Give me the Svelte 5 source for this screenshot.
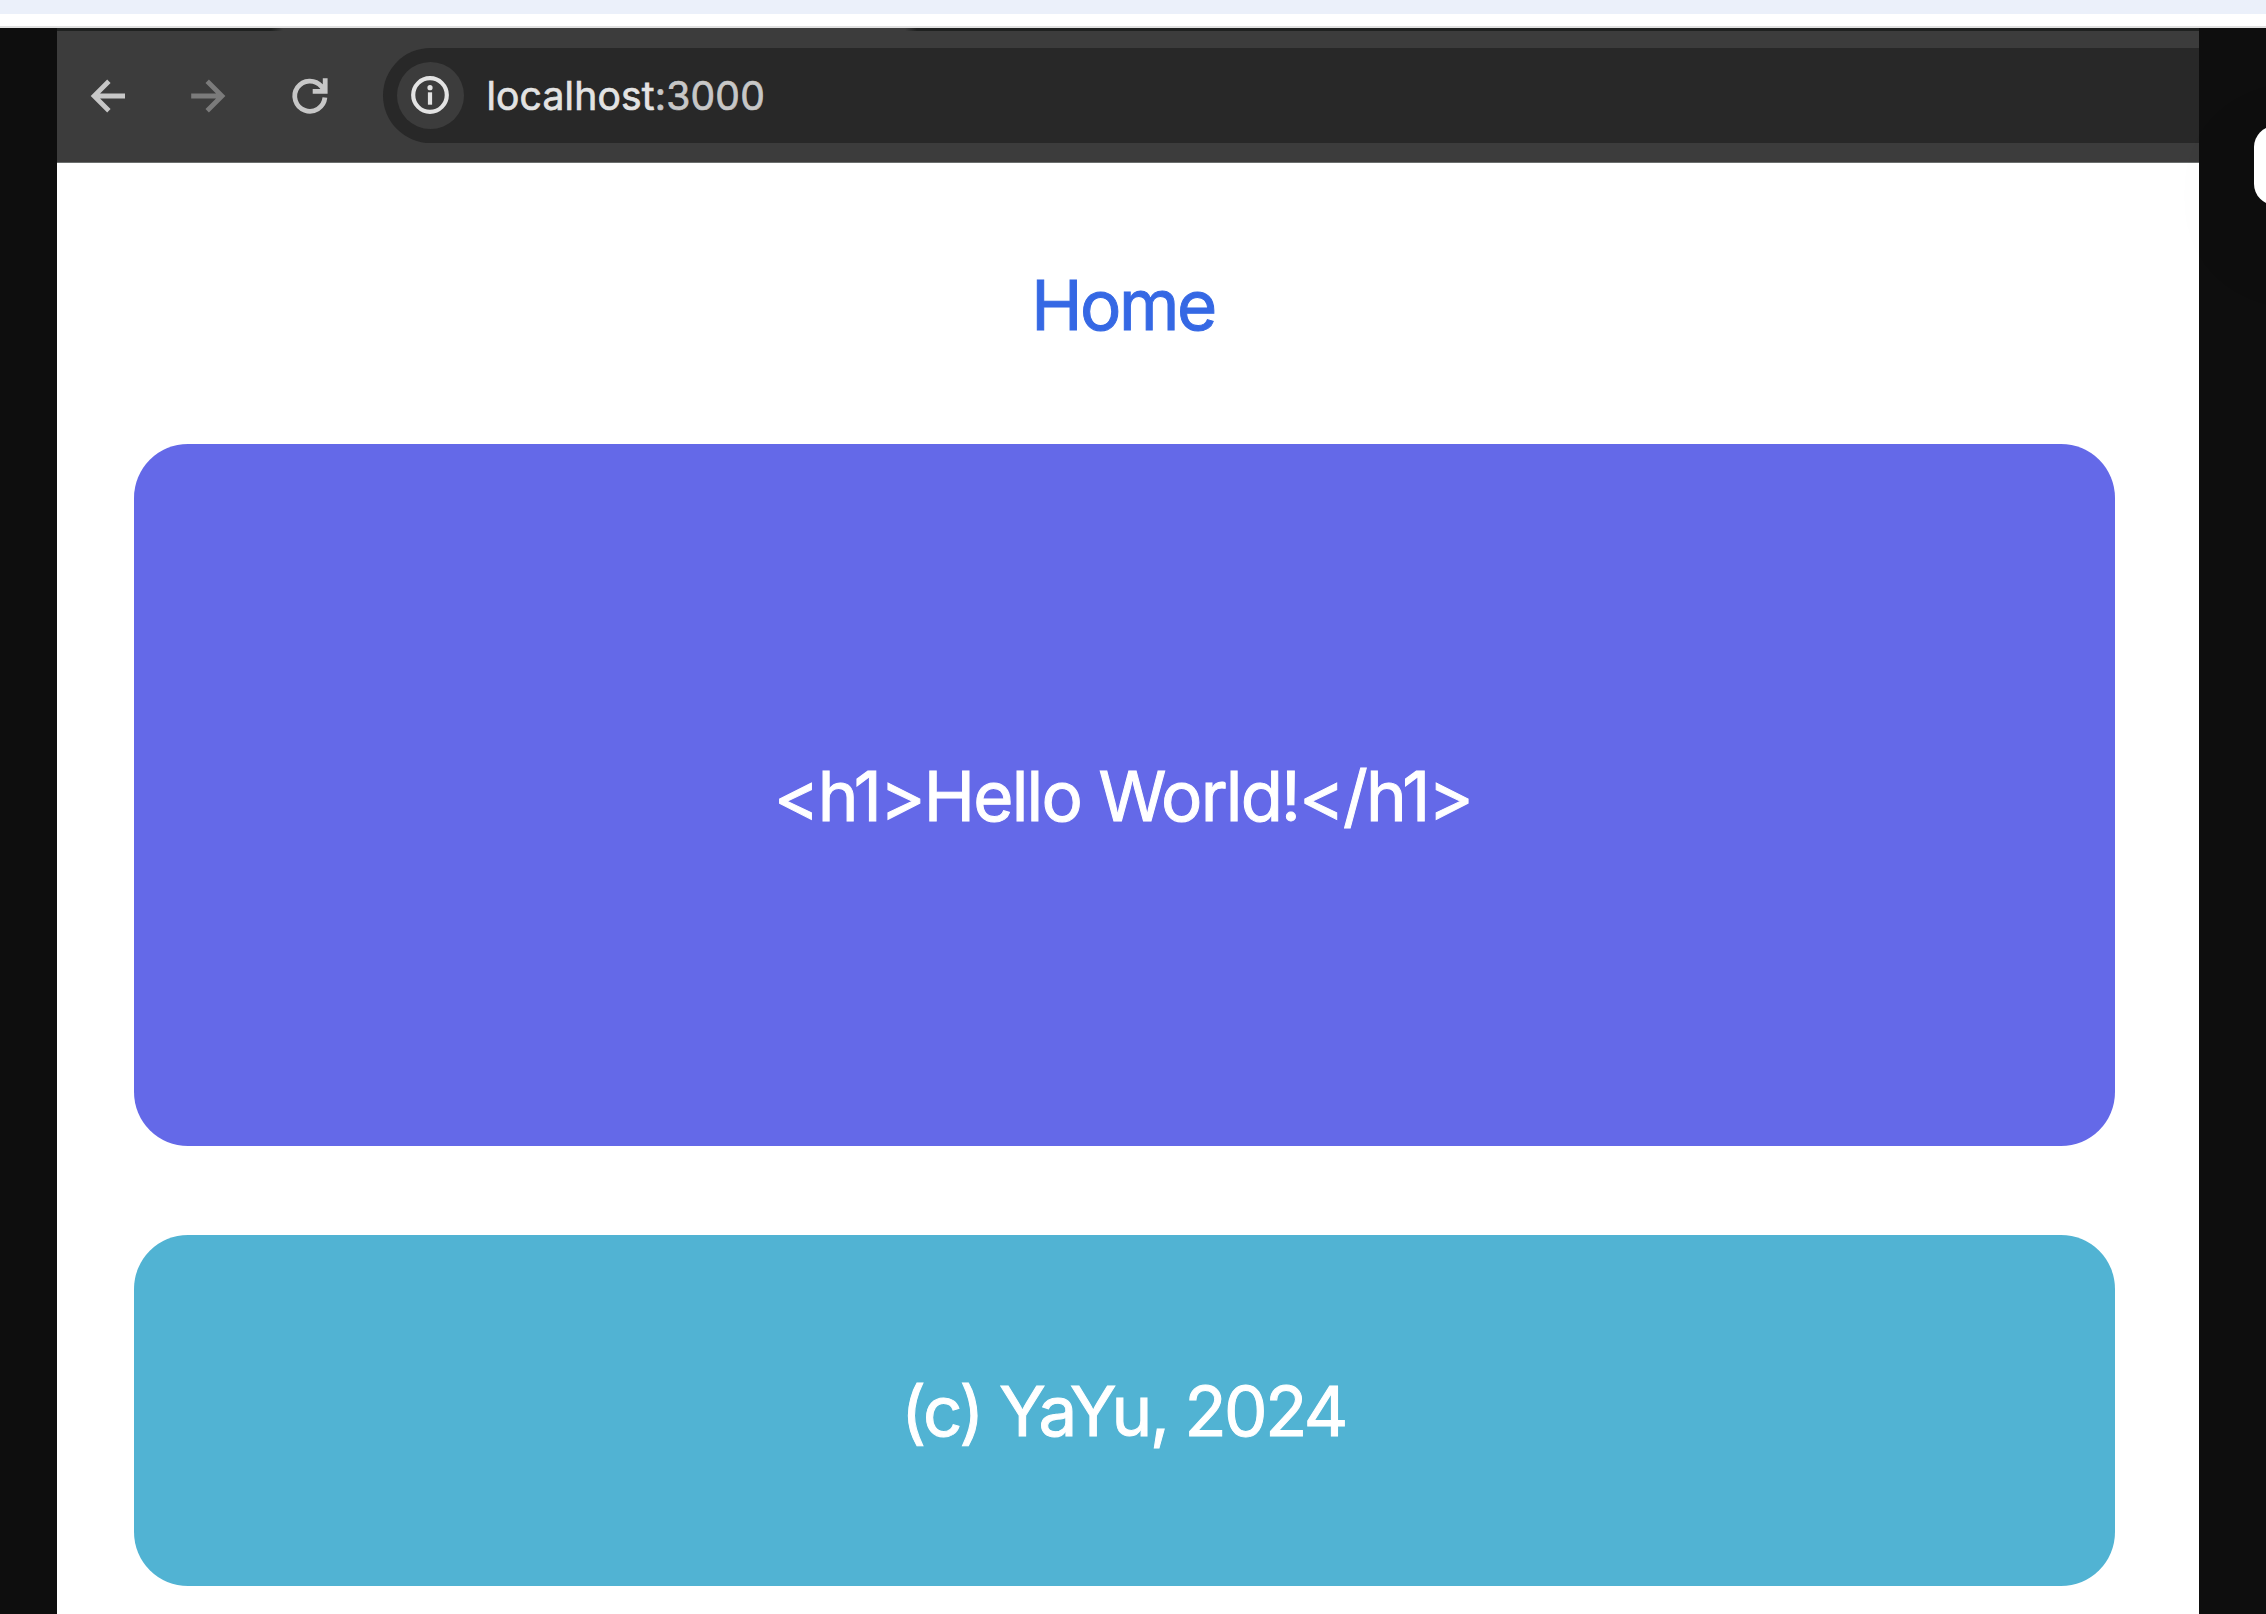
<script>
  const host = 'localhost';
  const port = ':3000';
  const heading = '<h1>Hello World!</h1>';
</script>

<div class="screen">
  <div class="band"></div>
  <div class="gap"></div>
  <main class="stage">
    <section class="browser">
      <header class="toolbar">
        <div class="tabs"></div>
        <nav class="controls">
          <svg class="icon" viewBox="0 0 40 40" aria-label="Back">
            <path d="M37 20H7M20.9 5.2L6.1 20L20.9 34.8" />
          </svg>
          <svg class="icon muted" viewBox="0 0 40 40" aria-label="Forward">
            <path d="M2.2 20H32M18.2 5.2L33 20L18.2 34.8" />
          </svg>
          <svg class="icon" viewBox="0 0 40 40" aria-label="Reload">
            <path d="M34.9 21.6A15.1 15.1 0 1 1 31.4 10.4L34 14M35.2 2.2V15.3H22.7" />
          </svg>
          <div class="address">
            <span class="info">
              <svg viewBox="0 0 40 40" aria-label="Site information">
                <circle cx="20" cy="20" r="16.8" />
                <path d="M20 17.3V29.7" />
                <circle class="dot" cx="20" cy="12.7" r="2.6" />
              </svg>
            </span>
            <span class="url">{host}<span class="port">{port}</span></span>
          </div>
        </nav>
      </header>
      <div class="page">
        <a class="home" href="/">Home</a>
        <div class="card hero"><span>{heading}</span></div>
        <div class="card footer"><span>(c) YaYu, 2024</span></div>
      </div>
    </section>
    <div class="side"><div class="bubble"></div></div>
  </main>
</div>

<style>
  :global(body) {
    margin: 0;
    overflow: hidden;
  }
  .screen {
    width: 2266px;
    height: 1614px;
    display: flex;
    flex-direction: column;
    overflow: hidden;
    background: #fff;
    font-family: Inter, 'Liberation Sans', sans-serif;
  }
  .band {
    height: 14px;
    background: #ebf0fa;
  }
  .gap {
    height: 12px;
    border-bottom: 2px solid #e0e0e0;
  }
  .stage {
    flex: 1;
    display: flex;
    padding-left: 57px;
    background: #0e0e0e;
  }
  .browser {
    flex: none;
    width: 2142px;
    background: #fff;
  }
  .toolbar {
    box-sizing: border-box;
    height: 135px;
    background: #3c3c3c;
    border-bottom: 1px solid #6b6e6d;
  }
  .tabs {
    height: 3px;
    background: linear-gradient(90deg, #1f2120 0 214px, #3c3c3c 226px 848px, #1f2120 860px);
  }
  .controls {
    display: flex;
    align-items: center;
    padding: 16.5px 0 0 31px;
  }
  .icon {
    flex: none;
    width: 40px;
    height: 40px;
    margin: 0.5px 60.8px 0 0;
    fill: none;
    stroke: #c7c7c7;
    stroke-width: 4.8;
  }
  .muted {
    stroke: #7b7b7b;
  }
  .address {
    flex: 1;
    display: flex;
    align-items: center;
    height: 95.5px;
    margin-left: -7.4px;
    padding-left: 13.6px;
    border-radius: 48px 0 0 48px;
    background: #282828;
  }
  .info {
    display: grid;
    place-items: center;
    width: 67px;
    height: 67px;
    border-radius: 50%;
    background: #3c3c3c;
  }
  .info svg {
    width: 40px;
    height: 40px;
    fill: none;
    stroke: #e3e3e3;
    stroke-width: 4.2;
  }
  .info .dot {
    fill: #e3e3e3;
    stroke: none;
  }
  .url {
    margin-left: 22.8px;
    padding-top: 2px;
    font-size: 39px;
    line-height: 48px;
    letter-spacing: 0.2px;
    color: #e3e3e3;
    white-space: nowrap;
    -webkit-text-stroke: 0.7px;
  }
  .port {
    color: #c7c7c7;
  }
  .page {
    display: flex;
    flex-direction: column;
    padding: 0 84px 0 77px;
    font-size: 69px;
    line-height: 84px;
    white-space: pre;
    -webkit-text-stroke: 1px;
  }
  .home {
    align-self: center;
    margin: 100px 3px 96.5px 0;
    letter-spacing: -2.5px;
    color: #3568e4;
    text-decoration: none;
  }
  .card {
    display: flex;
    align-items: center;
    justify-content: center;
    border-radius: 54px;
    color: #fff;
  }
  .hero {
    height: 702.5px;
    background: #6469e8;
  }
  .hero span {
    padding: 3px 3px 0 0;
    letter-spacing: -1.85px;
  }
  .footer {
    height: 351px;
    margin-top: 88.5px;
    background: #51b3d3;
  }
  .footer span {
    padding: 2px 2px 0 0;
    letter-spacing: -2.4px;
  }
  .side {
    flex: none;
    padding: 98px 0 0 55px;
  }
  .bubble {
    width: 120px;
    height: 79px;
    border-radius: 21px;
    background: #fff;
    box-shadow: 0 30px 90px rgba(0, 0, 0, 0.12);
  }
</style>
